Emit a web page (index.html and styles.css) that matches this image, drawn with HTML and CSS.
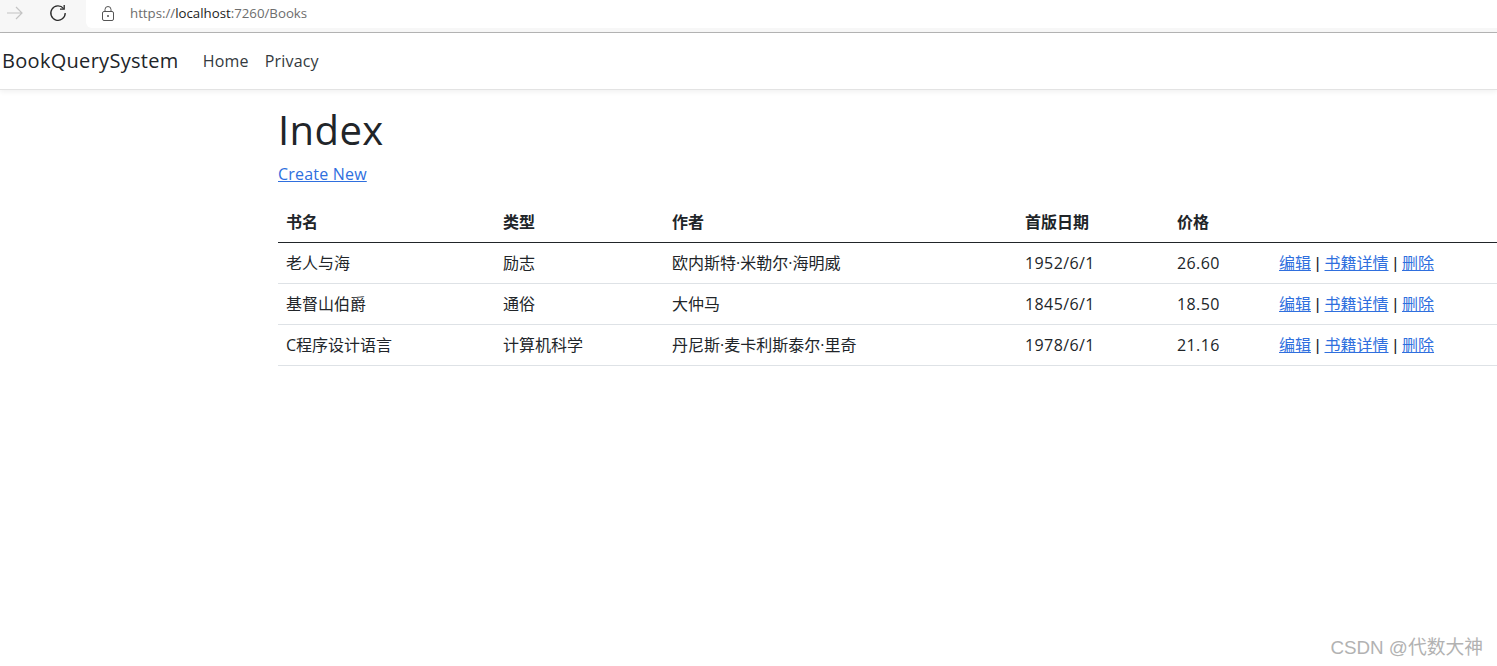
FILE: index.html
```html
<!DOCTYPE html>
<html lang="zh">
<head>
<meta charset="utf-8">
<title>Index</title>
<link rel="stylesheet" href="styles.css">
</head>
<body>
<div class="chrome">
  <div class="chrome-left">
    <svg class="ico-arrow" width="20" height="16" viewBox="0 0 20 16"><path d="M2 8h15M11 2l6 6-6 6" fill="none" stroke="#c4c4c4" stroke-width="1.2"/></svg>
    <svg class="ico-reload" width="18" height="18" viewBox="0 0 18 18"><path d="M14.6 4.6A7.2 7.2 0 1 0 16.2 9" fill="none" stroke="#2b2b2b" stroke-width="1.3"/><path d="M15.2 1v4.2H11" fill="none" stroke="#2b2b2b" stroke-width="1.3"/></svg>
  </div>
  <div class="address">
    <svg class="ico-lock" width="14" height="16" viewBox="0 0 14 16"><rect x="1.5" y="5.5" width="11" height="9" rx="1.5" fill="none" stroke="#555" stroke-width="1"/><path d="M4 5.5V3.5a3 3 0 0 1 6 0v2" fill="none" stroke="#555" stroke-width="1"/><circle cx="7" cy="10" r="1" fill="#555"/></svg>
    <span class="url">https://<span class="url-host">localhost</span>:7260/Books</span>
  </div>
</div>
<nav class="navbar">
  <a class="brand" href="#">BookQuerySystem</a>
  <a class="nav-link" href="#">Home</a>
  <a class="nav-link" href="#">Privacy</a>
</nav>
<main class="main">
  <h1 class="title">Index</h1>
  <p class="create"><a href="#">Create New</a></p>
  <table class="table">
    <colgroup>
      <col class="c1"><col class="c2"><col class="c3"><col class="c4"><col class="c5"><col class="c6">
    </colgroup>
    <thead>
      <tr><th>书名</th><th>类型</th><th>作者</th><th>首版日期</th><th>价格</th><th></th></tr>
    </thead>
    <tbody>
      <tr><td>老人与海</td><td>励志</td><td>欧内斯特·米勒尔·海明威</td><td class="num">1952/6/1</td><td class="num">26.60</td><td><a href="#">编辑</a><span class="sep"> | </span><a href="#">书籍详情</a><span class="sep"> | </span><a href="#">删除</a></td></tr>
      <tr><td>基督山伯爵</td><td>通俗</td><td>大仲马</td><td class="num">1845/6/1</td><td class="num">18.50</td><td><a href="#">编辑</a><span class="sep"> | </span><a href="#">书籍详情</a><span class="sep"> | </span><a href="#">删除</a></td></tr>
      <tr><td>C程序设计语言</td><td>计算机科学</td><td>丹尼斯·麦卡利斯泰尔·里奇</td><td class="num">1978/6/1</td><td class="num">21.16</td><td><a href="#">编辑</a><span class="sep"> | </span><a href="#">书籍详情</a><span class="sep"> | </span><a href="#">删除</a></td></tr>
    </tbody>
  </table>
</main>
<div class="watermark">CSDN @代数大神</div>
</body>
</html>
```
FILE: styles.css
```css
* { box-sizing: border-box; }
html, body { margin: 0; padding: 0; height: 100%; overflow: hidden; }
body {
  font-family: "Open Sans", "Noto Sans CJK SC", sans-serif;
  font-size: 16px;
  line-height: 1.5;
  color: #212529;
  background: #fff;
  position: relative;
}
a { color: #2f6fde; }
.chrome {
  height: 33px;
  display: flex;
  background: #f7f7f7;
  border-bottom: 1px solid #b4b4b4;
}
.chrome-left {
  width: 86px;
  display: flex;
  align-items: center;
  padding: 0 0 7px 5px;
  gap: 24px;
}
.address {
  flex: 1;
  height: 28px;
  background: #fff;
  border-bottom-left-radius: 6px;
  display: flex;
  align-items: center;
  padding-left: 15px;
  gap: 15px;
}
.url { font-size: 13.25px; color: #6d6d6d; }
.url-host { color: #1c1c1c; }
.navbar {
  height: 57px;
  display: flex;
  align-items: center;
  background: #fff;
  border-bottom: 1px solid #e3e3e3;
  box-shadow: 0 2px 5px rgba(0,0,0,.06);
  padding-left: 2px;
}
.brand { font-size: 20px; color: #212529; text-decoration: none; margin-right: 24px; letter-spacing: 0.3px; }
.nav-link { color: #343a40; text-decoration: none; margin-right: 16px; font-size: 16px; letter-spacing: 0.2px; }
.main { padding-left: 278px; }
.title { font-size: 40px; font-weight: 400; line-height: 48px; margin: 16px 0 8px; letter-spacing: 0.4px; }
.create { margin: 0 0 15px; line-height: 24px; letter-spacing: 0.2px; }
.table { width: 1219px; table-layout: fixed; border-collapse: collapse; }
.c1 { width: 217px; }
.c2 { width: 169px; }
.c3 { width: 353px; }
.c4 { width: 152px; }
.c5 { width: 102px; }
.c6 { width: 226px; }
.table th, .table td { text-align: left; padding: 8px; height: 41px; border-bottom: 1px solid #dee2e6; }
.table th { font-weight: 700; border-bottom: 1px solid #212529; vertical-align: bottom; }
.table .num { letter-spacing: 0.4px; }
.sep { font-family: "Liberation Sans", sans-serif; white-space: pre; line-height: 1; letter-spacing: 0.15px; }
.watermark {
  position: absolute;
  right: 14px;
  bottom: 4px;
  font-family: "Liberation Sans", "Noto Sans CJK SC", sans-serif;
  font-size: 18.8px;
  line-height: 28px;
  color: #b2b2b2;
}
```
